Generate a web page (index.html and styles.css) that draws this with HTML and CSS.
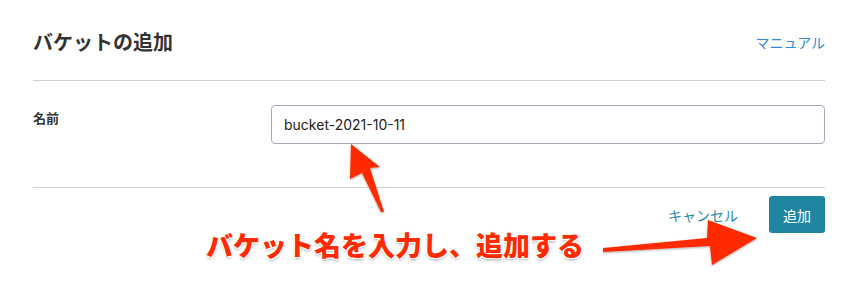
FILE: index.html
```html
<!DOCTYPE html>
<html>
<head>
    <link rel="stylesheet" href="styles.css">
</head>
<body>
    <div class="panel">
        <div class="panel-header">
            <h1 class="title">バケットの追加</h1>
            <a class="manual" href="#">マニュアル</a>
        </div>

        <div class="form-row">
            <label class="label">名前</label>
            <input class="text-input" type="text" value="bucket-2021-10-11">
        </div>

        <div class="panel-footer">
            <a class="cancel" href="#">キャンセル</a>
            <button class="btn-add">追加</button>
        </div>
    </div>

    <!-- annotation overlay -->
    <svg class="arrows" width="860" height="281" viewBox="0 0 860 281">
        <defs>
            <filter id="shadow" x="-20%" y="-20%" width="140%" height="140%">
                <feDropShadow dx="0" dy="1" stdDeviation="1.2" flood-color="#000" flood-opacity="0.35"/>
            </filter>
        </defs>
        <path filter="url(#shadow)" fill="#ff2a00"
              d="M351 144 L380 167 L370 168 L384 212 L381 212 L362 173 L350 179 Z"/>
        <path filter="url(#shadow)" fill="#ff2a00"
              d="M603 248 L707 238 L708 220 L757 238 L712 265 L710 246 L603 252 Z"/>
    </svg>
    <div class="note">バケット名を入力し、追加する</div>
</body>
</html>
```

FILE: styles.css
```css
body {
    margin: 0;
    background: #fff;
    font-family: "Noto Sans CJK JP", sans-serif;
    color: #333;
}

.panel {
    padding: 0 35px 0 33px;
}

/* Header */
.panel-header {
    display: flex;
    justify-content: space-between;
    align-items: center;
    height: 81px;
    padding-top: 3px;
    box-sizing: border-box;
    border-bottom: 1px solid #cfcfd8;
}

.title {
    margin: 0;
    font-size: 20px;
    font-weight: 700;
    color: #333;
}

.manual {
    font-size: 14px;
    color: #2f8ad8;
    text-decoration: none;
}

/* Form */
.form-row {
    display: flex;
    align-items: flex-start;
    padding: 24px 0 43px;
    border-bottom: 1px solid #cfcfd8;
}

.label {
    width: 238px;
    flex-shrink: 0;
    padding-top: 3px;
    font-size: 13px;
    font-weight: 700;
    color: #333;
}

.text-input {
    flex: 1;
    height: 39px;
    box-sizing: border-box;
    border: 1px solid #a8a8bb;
    border-radius: 4px;
    padding: 0 12px;
    font-family: Inter, "Noto Sans", sans-serif;
    font-size: 14px;
    color: #222;
    outline: none;
}

/* Footer */
.panel-footer {
    display: flex;
    justify-content: flex-end;
    align-items: center;
    gap: 31px;
    padding-top: 8px;
}

.cancel {
    font-size: 14px;
    color: #2a8aa8;
    text-decoration: none;
}

.btn-add {
    width: 56px;
    height: 37px;
    border: none;
    border-radius: 3px;
    background: #1f86a1;
    color: #fff;
    font-family: "Noto Sans CJK JP", sans-serif;
    font-size: 14px;
}

/* Annotation overlay */
.arrows {
    position: absolute;
    left: 0;
    top: 0;
    pointer-events: none;
}

.note {
    position: absolute;
    left: 206px;
    top: 225px;
    font-size: 27px;
    font-weight: 900;
    color: #ff2a00;
    white-space: nowrap;
    text-shadow:
        -1px -1px 0 #fff, 1px -1px 0 #fff, -1px 1px 0 #fff, 1px 1px 0 #fff,
        0 2px 3px rgba(0, 0, 0, 0.35);
}
```
